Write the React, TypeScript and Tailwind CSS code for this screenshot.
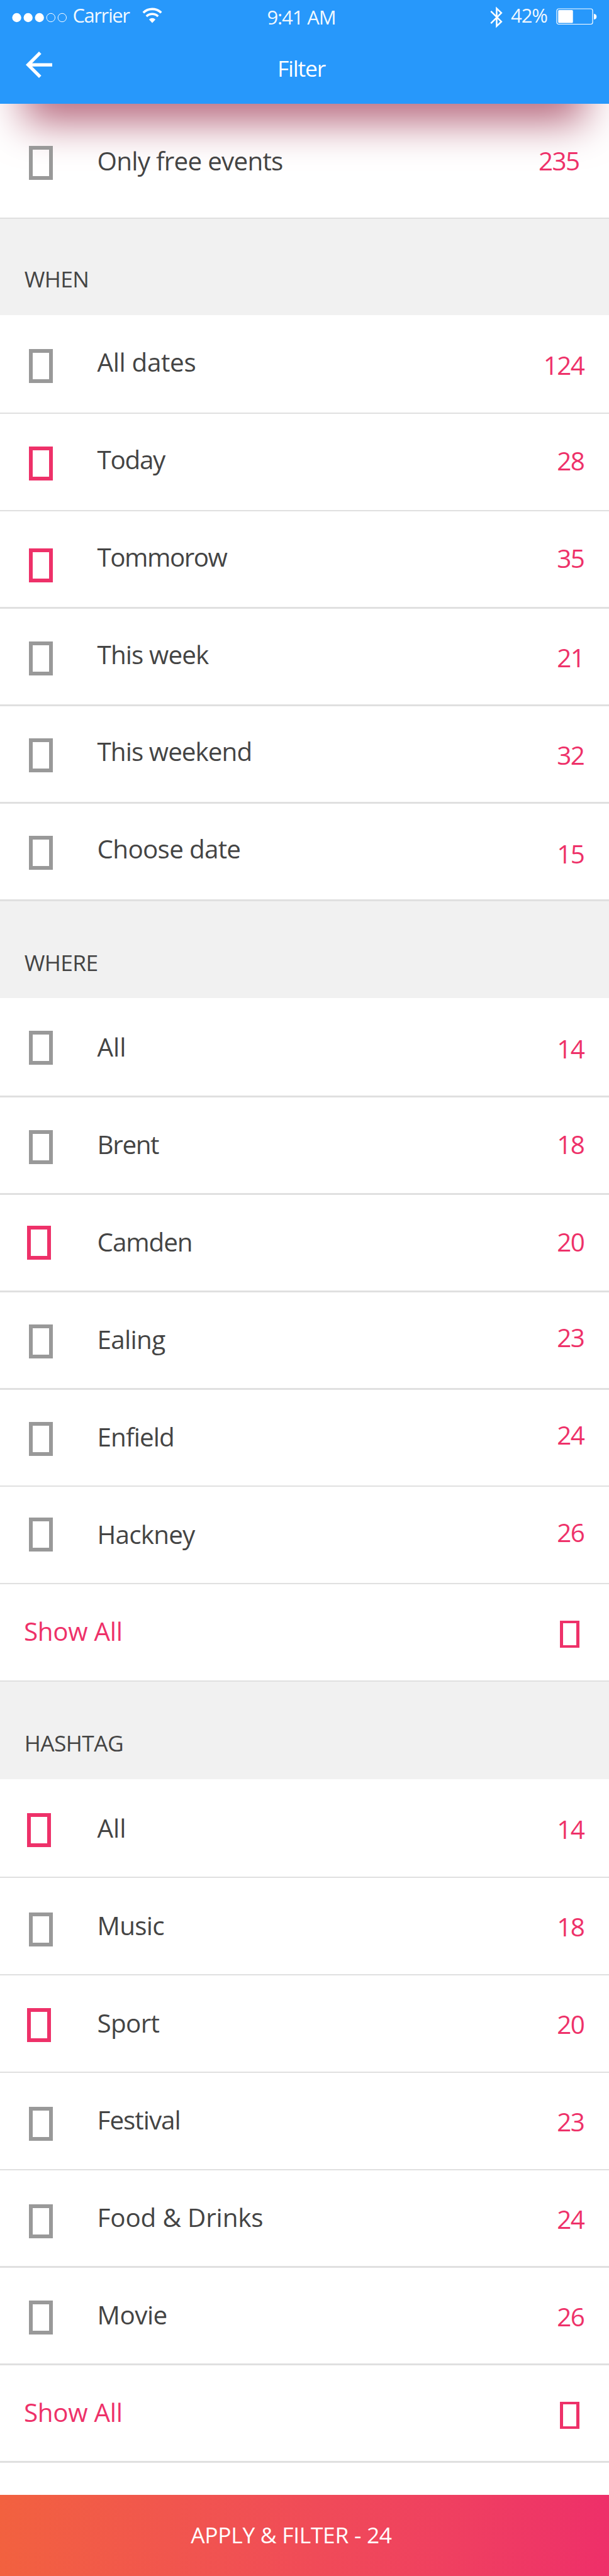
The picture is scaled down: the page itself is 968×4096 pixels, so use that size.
const S = 968 / 1125;
const px = (n: number) => `${n * S}px`;

type Item = {
  label: string;
  count: number;
  box: number;
  base: number;
  tracking: number;
  on?: boolean;
  inset?: number;
};

/* box: offset of the checkbox from the row's top; base: offset of the count's baseline. */
const free: Item = { label: "Only free events", count: 235, box: 78, base: 123, tracking: -0.75 };
const when: Item[] = [
  { label: "All dates", count: 124, box: 60, base: 108, tracking: -0.35 },
  { label: "Today", count: 28, box: 60, base: 105, tracking: -1.3, on: true },
  { label: "Tommorow", count: 35, box: 69, base: 105, tracking: -1.5, on: true },
  { label: "This week", count: 21, box: 60, base: 108, tracking: -0.9 },
  { label: "This weekend", count: 32, box: 60, base: 108, tracking: -0.95 },
  { label: "Choose date", count: 15, box: 60, base: 111, tracking: -0.7 },
];
const where: Item[] = [
  { label: "All", count: 14, box: 57, base: 108, tracking: 0 },
  { label: "Brent", count: 18, box: 60, base: 105, tracking: -1.4 },
  { label: "Camden", count: 20, box: 57, base: 105, tracking: -1.1, on: true, inset: 50.5 },
  { label: "Ealing", count: 23, box: 60, base: 102, tracking: -0.7 },
  { label: "Enfield", count: 24, box: 60, base: 102, tracking: -0.9 },
  { label: "Hackney", count: 26, box: 57, base: 102, tracking: -0.8 },
];
const hashtag: Item[] = [
  { label: "All", count: 14, box: 60, base: 108, tracking: 0, on: true, inset: 50.5 },
  { label: "Music", count: 18, box: 63, base: 108, tracking: -0.7 },
  { label: "Sport", count: 20, box: 60, base: 108, tracking: -0.7, on: true, inset: 50.5 },
  { label: "Festival", count: 23, box: 63, base: 108, tracking: -1 },
  { label: "Food & Drinks", count: 24, box: 63, base: 108, tracking: -0.15 },
  { label: "Movie", count: 26, box: 60, base: 108, tracking: -0.5 },
];

/* Distance from a label's top to its baseline, for the 40.4px text. */
const ASCENT = 43.2 / S;
const textTop = (base: number) => px(base - ASCENT);

function Rule() {
  return <div className="h-[2.58px] w-full shrink-0 bg-[#e0e0e0]" />;
}

function Row({ item, height, labelBase, right = 46 }: { item: Item; height: number; labelBase: number; right?: number }) {
  const inset = item.inset ?? 53;
  return (
    <div className="flex shrink-0 items-start" style={{ height: px(height), paddingLeft: px(inset), paddingRight: px(right) }}>
      <button
        aria-label={item.label}
        className={
          item.on
            ? "h-[54px] w-[38px] shrink-0 border-[6px] border-[#ee3169]"
            : "h-[54px] w-[38px] shrink-0 border-[6px] border-[#999999]"
        }
        style={{ marginTop: px(item.box) }}
      />
      <span
        className="grow text-[40.4px] leading-[55px] whitespace-nowrap text-[#444444]"
        style={{
          marginTop: textTop(labelBase),
          marginLeft: `${154.6 - inset * S - 38}px`,
          letterSpacing: `${item.tracking}px`,
        }}
      >
        {item.label}
      </span>
      <span
        className="text-[40.4px] leading-[55px] tracking-[-1.5px] text-[#ee3169]"
        style={{ marginTop: textTop(item.base) }}
      >
        {item.count}
      </span>
    </div>
  );
}

function ShowAll({ icon }: { icon: number }) {
  return (
    <>
      <div className="flex h-[152.3px] shrink-0 items-start justify-between pr-[47px] pl-[38px] text-[#ee3169]">
        <span className="text-[40.4px] leading-[55px] tracking-[-0.3px]" style={{ marginTop: textTop(105) }}>
          Show All
        </span>
        <button
          aria-label="Expand"
          className="h-[43px] w-[31px] border-x-[5px] border-y-[4px] border-[#ee3169]"
          style={{ marginTop: px(icon) }}
        />
      </div>
      <Rule />
    </>
  );
}

function Section({ title, height, items, labelBase, more }: { title: string; height: number; items: Item[]; labelBase: number; more?: number }) {
  return (
    <section className="flex shrink-0 flex-col">
      <div className="flex items-end bg-[#f1f1f1] pb-[33.6px] pl-[38.7px]" style={{ height: px(height) }}>
        <h2 className="text-[35.4px] leading-[48px] tracking-[-0.6px] text-[#444444]">{title}</h2>
      </div>
      {items.map((item, i) => {
        const extra = i === 0 ? 3 : 0;
        return (
          <div key={item.label} className="flex flex-col">
            <Row
              item={{ ...item, box: item.box + extra, base: item.base + extra }}
              height={177 + extra}
              labelBase={labelBase + extra}
            />
            <Rule />
          </div>
        );
      })}
      {more !== undefined && <ShowAll icon={more} />}
    </section>
  );
}

function StatusBar() {
  return (
    <div className="grid h-[62px] grid-cols-3 items-start px-[18.9px]">
      <div className="flex items-start">
        <svg className="mt-[19.8px] h-[23px] w-[90px]" viewBox="0 0 90 23" fill="#fff">
          <circle cx="7.6" cy="8" r="7.2" />
          <circle cx="25.7" cy="8" r="7.2" />
          <circle cx="43.7" cy="8" r="7.2" />
          <circle cx="61.8" cy="8" r="6.7" fill="none" stroke="#fff" strokeWidth="1" />
          <circle cx="79.8" cy="8" r="6.7" fill="none" stroke="#fff" strokeWidth="1" />
        </svg>
        <span className="mt-[3.1px] ml-[6.5px] w-[102px] text-[31px] leading-[42px] tracking-[-1.4px] text-white/95">Carrier</span>
        <svg className="mt-[12px] ml-[8.7px] h-[25px] w-[32px]" viewBox="0 0 37 29" fill="none" stroke="#fff" strokeWidth="4.2">
          <path d="M2 9.5 A23.5 23.5 0 0 1 35 9.5" />
          <path d="M7.8 16.2 A15.5 15.5 0 0 1 29.2 16.2" />
          <path d="M18.5 28.5 L12.6 22 A8.3 8.3 0 0 1 24.4 22 Z" fill="#fff" stroke="none" />
        </svg>
      </div>
      <span className="mt-[5.6px] pr-[10px] text-center text-[31px] leading-[42px] tracking-[-1.1px] text-white/95">9:41 AM</span>
      <div className="flex items-start justify-end">
        <svg className="mt-[10px] h-[35px] w-[20px]" viewBox="0 0 23 40" fill="none" stroke="#fff" strokeWidth="2.9">
          <path d="M1.5 9 L20.5 28 L12 36.2 V3.8 L20.5 12 L1.5 31" />
        </svg>
        <span className="mt-[3.1px] ml-[13.2px] w-[60px] text-[31px] leading-[42px] tracking-[-1.1px] text-white/95">42%</span>
        <svg className="mt-[12.5px] ml-[12px] h-[27px] w-[65px]" viewBox="0 0 65 27">
          <rect x="1" y="1" width="57" height="24.5" rx="3" fill="none" stroke="#fff" strokeWidth="1.2" />
          <rect x="3.2" y="3" width="23.5" height="20.6" rx="1.5" fill="#fff" />
          <path d="M60 9 Q64.3 9.5 64.3 13.4 Q64.3 17.4 60 18 Z" fill="#fff" />
        </svg>
      </div>
    </div>
  );
}

export default function App() {
  return (
    <main className="flex h-[4096px] w-[968px] flex-col overflow-hidden bg-white font-['Open_Sans',sans-serif]">
      <header className="h-[165.2px] shrink-0 bg-[#2798fb] shadow-[0_66px_66px_-38px_#b46379]">
        <StatusBar />
        <div className="grid grid-cols-3 px-[41px] text-white">
          <svg className="mt-[19.5px] h-[42px] w-[42px]" viewBox="0 0 24 24" fill="#fff">
            <path d="M24 10.5 H5.74 L14.13 2.11 L12 0 L0 12 L12 24 L14.11 21.89 L5.74 13.5 H24 Z" />
          </svg>
          <h1 className="mt-[21.5px] -ml-[10px] text-center text-[35.4px] leading-[48px] tracking-[-1.2px]">Filter</h1>
        </div>
      </header>
      <Row item={free} height={210} labelBase={123} right={55} />
      <Rule />
      <Section title="WHEN" height={177} items={when} labelBase={102} />
      <Section title="WHERE" height={180} items={where} labelBase={105} more={67} />
      <Section title="HASHTAG" height={180} items={hashtag} labelBase={105} more={67} />
      <footer className="mt-[51.6px] flex h-[130px] shrink-0 items-start justify-center bg-linear-to-r from-[#f2613f] to-[#ee2f69] pr-[42px] text-white">
        <button className="mt-[39px] text-[35.4px] leading-[48px] tracking-[-0.3px]">APPLY &amp; FILTER - 24</button>
      </footer>
    </main>
  );
}
